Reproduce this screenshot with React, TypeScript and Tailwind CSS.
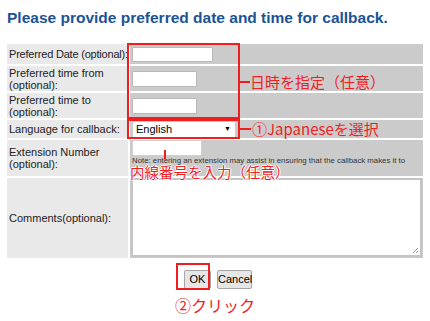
import React from 'react';

const en = { fontFamily: '"Liberation Sans", Arial, sans-serif' };
const jp = { fontFamily: '"Noto Sans CJK JP", "Noto Sans", sans-serif' };

function Label({ children }: { children: React.ReactNode }) {
  return (
    <div className="bg-[#e9e9e9] flex items-center pl-[2px] text-[11px] leading-[12px] text-[#222]">
      {children}
    </div>
  );
}

function TextInput({ width }: { width: string }) {
  return <div className={`${width} h-[16px] bg-white border border-[#b8b8b8] rounded-[1px]`} />;
}

export default function App() {
  return (
    <div className="relative w-[430px] h-[321px] bg-white overflow-hidden" style={en}>
      <h1 className="pl-[7px] pt-[9px] text-[15.5px] leading-[18px] font-bold text-[#1b5394]">
        Please provide preferred date and time for callback.
      </h1>

      {/* form table */}
      <div className="mt-[17px] ml-[7px] w-[416px] grid grid-cols-[121px_1fr] gap-[2px]">
        <Label>
          <span className="whitespace-nowrap tracking-[-0.2px]">Preferred Date (optional):</span>
        </Label>
        <div className="bg-[#cbcbcb] h-[20px] flex items-center pl-[2px]">
          <div className="w-[81px] h-[15px] bg-white border border-[#b8b8b8] rounded-[1px]" />
        </div>

        <Label>Preferred time from (optional):</Label>
        <div className="bg-[#cbcbcb] h-[25px] flex items-center pl-[2px]">
          <TextInput width="w-[65px]" />
        </div>

        <Label>Preferred time to (optional):</Label>
        <div className="bg-[#cbcbcb] h-[25px] flex items-center pl-[2px]">
          <TextInput width="w-[65px]" />
        </div>

        <Label>Language for callback:</Label>
        <div className="bg-[#cbcbcb] h-[18px] flex items-center pl-[3px]">
          <div className="w-[102px] h-[15px] bg-white flex items-center justify-between pl-[3px] pr-[4px] text-[11px] text-black">
            <span>English</span>
            <span className="text-[7px]">▼</span>
          </div>
        </div>

        <Label>Extension Number (optional):</Label>
        <div className="bg-[#cbcbcb] h-[36px] flex flex-col pl-[2px]">
          <div className="w-[70px] h-[16px] bg-white border border-[#d0d0d0]" />
          <div className="text-[7.8px] leading-[8px] text-[#333] mt-[1px] whitespace-nowrap">
            Note: entering an extension may assist in ensuring that the callback makes it to
          </div>
        </div>

        <Label>Comments(optional):</Label>
        <div className="bg-[#cbcbcb] h-[80px] pl-[1px] pr-[1px] pb-[1px]">
          <div className="relative w-full h-full bg-white border-2 border-[#c4c4c4]">
            <svg className="absolute right-[1px] bottom-[1px]" width="8" height="8" viewBox="0 0 8 8">
              <path d="M7 2 L2 7 M7 5 L5 7" stroke="#999" strokeWidth="1" />
            </svg>
          </div>
        </div>
      </div>

      {/* buttons */}
      <div className="mt-[12px] flex justify-center gap-[6px] pl-[6px]">
        <button className="w-[27px] h-[19px] text-[11px] text-black bg-[#e6e6e6] border border-[#a6a6a6] rounded-[2px]">
          OK
        </button>
        <button className="w-[35px] h-[19px] text-[11px] text-black bg-[#e6e6e6] border border-[#a6a6a6] rounded-[2px]">
          Cancel
        </button>
      </div>

      {/* annotations */}
      <div className="absolute left-[127px] top-[43px] w-[113px] h-[76px] border-2 border-[#f01e1e]" />
      <div className="absolute left-[240px] top-[81px] w-[10px] h-[2px] bg-[#f01e1e]" />
      <div className="absolute left-[250px] top-[72px] text-[15px] leading-[19px] text-[#f01e1e]" style={jp}>
        日時を指定（任意）
      </div>

      <div className="absolute left-[127px] top-[119px] w-[113px] h-[20px] border-2 border-[#f01e1e]" />
      <div className="absolute left-[240px] top-[128px] w-[11px] h-[2px] bg-[#f01e1e]" />
      <div className="absolute left-[252px] top-[119px] text-[15px] leading-[19px] text-[#f01e1e]" style={jp}>
        ①Japaneseを選択
      </div>

      <div className="absolute left-[164px] top-[150px] w-[2px] h-[9px] bg-[#f01e1e]" />
      <div
        className="absolute left-[130px] top-[163px] text-[14.5px] leading-[18px] text-[#f01e1e]"
        style={{ ...jp, textShadow: '1px 0 0 #fff, -1px 0 0 #fff, 0 1px 0 #fff, 0 -1px 0 #fff' }}
      >
        内線番号を入力（任意）
      </div>

      <div className="absolute left-[176px] top-[263px] w-[34px] h-[27px] border-2 border-[#f01e1e]" />
      <div className="absolute left-[175px] top-[295px] text-[16px] leading-[20px] text-[#f01e1e]" style={jp}>
        ②クリック
      </div>
    </div>
  );
}
